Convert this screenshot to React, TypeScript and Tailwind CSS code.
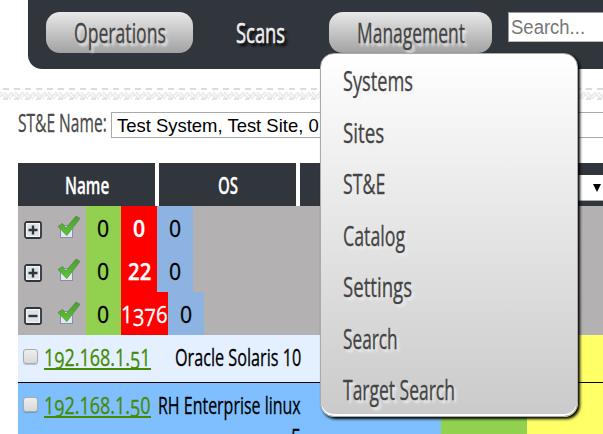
import { useLayoutEffect, useRef, useState } from "react";
import type { ReactNode } from "react";

// Sets a line of text in a condensed width.
function Fit({ w, className = "", children }: { w: number; className?: string; children: ReactNode }) {
  const ref = useRef<HTMLSpanElement>(null);
  const [scale, setScale] = useState(1);
  useLayoutEffect(() => {
    if (ref.current) setScale(w / ref.current.offsetWidth);
  }, [w]);
  return (
    <span className={`block shrink-0 ${className}`} style={{ width: w }}>
      <span ref={ref} className="inline-block origin-left whitespace-nowrap" style={{ transform: `scaleX(${scale})` }}>
        {children}
      </span>
    </span>
  );
}

// Old-style figures: 3, 5, 7 and 9 hang below the baseline.
function Figures({ text }: { text: string }) {
  return (
    <>
      {text.split(/([3579])/).map((part, i) => (i % 2 ? <span key={i} className="relative top-[3px]">{part}</span> : part))}
    </>
  );
}

const menu: [string, number][] = [
  ["Systems", 70],
  ["Sites", 41],
  ["ST&E", 42],
  ["Catalog", 62],
  ["Settings", 69],
  ["Search", 55],
  ["Target Search", 112],
];

function Toggle({ open }: { open: boolean }) {
  return (
    <svg className="ml-[6px] mt-[5px] shrink-0" width="18" height="18" viewBox="0 0 18 18">
      <rect x="1" y="1" width="16" height="16" rx="2" fill="#e8eef2" stroke="#30353c" strokeWidth="1.8" />
      <rect x="2.6" y="2.6" width="12.8" height="12.8" fill="#dde2e6" stroke="#f5f8fa" strokeWidth="1" />
      <path d={open ? "M4.5 9H13.5" : "M4.5 9H13.5M9 4.5V13.5"} stroke="#30353c" strokeWidth="2.4" />
    </svg>
  );
}

function Check() {
  return (
    <svg className="ml-[14px] mb-px shrink-0" width="24" height="24" viewBox="0 0 24 24">
      <defs>
        <linearGradient id="tick" x1="0" y1="0" x2="0" y2="1">
          <stop offset="0" stopColor="#4f9a35" />
          <stop offset="1" stopColor="#58c92d" />
        </linearGradient>
      </defs>
      <rect x="4.5" y="10.5" width="12" height="12" fill="#e4e7ee" stroke="#8290a8" />
      <path d="M2 11.5L6.5 8.5L10 13L20 1L24 3.4L10.8 20.5Z" fill="url(#tick)" stroke="#5b8a4c" strokeWidth=".8" />
    </svg>
  );
}

const groups = [
  { open: false, n: "0", nw: 12, cell: "w-9 font-semibold" },
  { open: false, n: "22", nw: 23, cell: "w-9 font-semibold" },
  { open: true, n: "1376", nw: 47, cell: "w-[47px]" },
];

function Box() {
  return <span className="ml-[5px] mt-[14px] size-[15px] shrink-0 rounded-[3px] border border-[#aaa] bg-linear-to-b from-[#eee] to-[#d9d9d9] shadow-[0_1px_1px_#0003]" />;
}

function Address({ ip }: { ip: string }) {
  return (
    <Fit w={107} className="ml-[6px] pt-[10px] leading-[24px] text-[#458b00]">
      <span className="block h-[25px] border-b-2 border-[#458b00]"><Figures text={ip} /></span>
    </Fit>
  );
}

const glow = "[text-shadow:4px_3px_3px_#eee]";

export default function App() {
  return (
    <div className="relative h-[434px] w-[603px] overflow-hidden bg-white font-['Open_Sans',sans-serif] text-black [-webkit-text-stroke:0.3px]">
      <nav className="ml-7 flex h-[69px] items-start rounded-bl-[14px] bg-[#31353c] pt-3 text-[27px] leading-[41px]">
        <div className={`ml-[18px] flex h-[41px] w-[147px] justify-center rounded-[14px] bg-linear-to-b from-[#e9e9e9] to-[#a2a2a2] text-[#444] ${glow}`}>
          <Fit w={92}>Operations</Fit>
        </div>
        <Fit w={49} className="ml-[43px] text-[#eee] [text-shadow:4px_3px_3px_#000] [-webkit-text-stroke:0.6px]">Scans</Fit>
        <div className={`ml-[44px] flex h-[41px] w-[163px] justify-center rounded-[14px] bg-linear-to-b from-[#e9e9e9] to-[#a2a2a2] text-[#444] ${glow}`}>
          <Fit w={108}>Management</Fit>
        </div>
        <div className="ml-4 h-[30px] flex-1 border border-r-0 border-[#9a9a9a] border-b-[#bbb] bg-white pl-[2px] font-['Liberation_Sans',sans-serif] text-[20px] leading-[28px] text-[#777] [-webkit-text-stroke:0px]">
          <Fit w={74}>Search...</Fit>
        </div>
      </nav>

      <svg className="mt-[19px] block" width="603" height="13">
        <defs>
          <pattern id="band" width="11" height="13" patternUnits="userSpaceOnUse">
            <path d="M3 1H9" stroke="#dcdcdc" strokeWidth="2" />
            <path d="M0 4L6 10M4 4L11 11M6 11L11 5M0 9L3 6" stroke="#ebebeb" strokeWidth="1.8" />
            <path d="M3 11H8" stroke="#dedede" strokeWidth="1.6" />
          </pattern>
        </defs>
        <rect width="603" height="13" fill="url(#band)" />
      </svg>

      <div className="mt-[11px] flex h-[26px] pl-[18px]">
        <Fit w={89} className="text-[25px] leading-[20px] text-[#4a4a4a]">ST&amp;E Name:</Fit>
        <div className="ml-[4px] flex-1 border border-r-0 border-[#a9a9a9] pl-[5px] font-['Liberation_Sans',sans-serif] text-[19px] leading-[25px] [-webkit-text-stroke:0px]">
          <Fit w={202}>Test System, Test Site, 0</Fit>
        </div>
      </div>

      <div className="mt-[25px] ml-[18px]">
        <div className="flex h-[43px] gap-1 text-[24px] leading-[43px] font-semibold text-white">
          <div className="flex w-[137px] justify-center bg-[#31353c]"><Fit w={44}>Name</Fit></div>
          <div className="flex w-[137px] justify-center bg-[#31353c]"><Fit w={20}>OS</Fit></div>
          <div className="flex flex-1 items-start justify-end bg-[#31353c] pt-3">
            <div className="flex h-[26px] w-10 items-center justify-end border-b border-[#aaa] bg-white pr-[2px]">
              <svg width="8" height="8"><path d="M0 0H8L4 8Z" fill="#000" /></svg>
            </div>
          </div>
        </div>

        <div className="bg-[#b3b1b2] text-[23px] leading-[45px]">
          {groups.map((g) => (
            <div key={g.n} className="flex h-[43px] items-center">
              <Toggle open={g.open} />
              <Check />
              <div className="ml-[6px] flex h-[43px] w-[35px] justify-center bg-[#92d050] pr-px"><Fit w={12}>0</Fit></div>
              <div className={`flex h-[43px] justify-center bg-[#f00] text-white ${g.cell}`}><Fit w={g.nw}><Figures text={g.n} /></Fit></div>
              <div className="flex h-[43px] w-9 justify-center bg-[#8db3e2] pr-px"><Fit w={12}>0</Fit></div>
            </div>
          ))}
        </div>

        <div className="flex h-[48px] border-b border-black bg-[#e4f0ff] text-[23px] leading-[45px]">
          <Box />
          <Address ip="192.168.1.51" />
          <Fit w={126} className="ml-[24px]">Oracle Solaris 10</Fit>
          <div className="ml-auto w-[76px] bg-[#ff6]" />
        </div>
        <div className="flex h-[60px] bg-[#7fbfff] text-[23px] leading-[45px]">
          <Box />
          <Address ip="192.168.1.50" />
          <div className="ml-[7px] flex w-[143px] flex-col items-end">
            <Fit w={143} className="h-[33px]">RH Enterprise linux</Fit>
            <Fit w={10} className="leading-[42px]">5</Fit>
          </div>
          <div className="ml-auto w-[86px] bg-[#92d050]" />
          <div className="w-[76px] bg-[#ff6]" />
        </div>
      </div>

      <div className={`absolute top-[53px] left-[320px] h-[364px] w-[258px] rounded-[14px] border border-[#aaa] bg-linear-to-b from-white to-[#cacaca] pt-px pl-[22px] text-[27px] leading-[51.5px] text-[#444] shadow-[2px_2px_3px_#000,inset_0_-2px_0_#fff] ${glow}`}>
        {menu.map(([label, w]) => (
          <Fit key={label} w={w} className="h-[51.5px]">{label}</Fit>
        ))}
      </div>
    </div>
  );
}
